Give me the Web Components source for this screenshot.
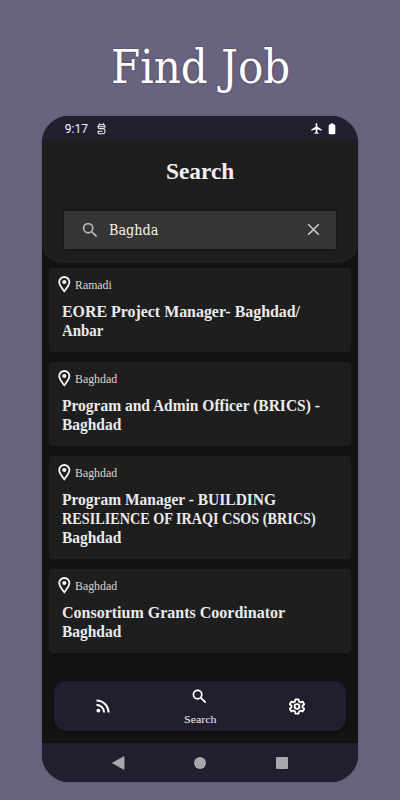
<!DOCTYPE html>
<html lang="en">
<head>
<meta charset="utf-8">
<title>Find Job</title>
<style>
    body {
        margin: 0;
        width: 400px;
        height: 800px;
        overflow: hidden;
        background: #6a6380;
        color: #ececec;
        font-family: "Liberation Serif", serif;
    }
</style>
</head>
<body>
<job-promo>
    <fit-text slot="headline" width="179">Find Job</fit-text>
    <phone-frame>
        <status-bar slot="top">9:17</status-bar>
        <search-header query="Baghda" query-width="49.5">
            <fit-text width="68.5">Search</fit-text>
        </search-header>
        <job-card>
            <fit-text slot="place" width="36.5">Ramadi</fit-text>
            <fit-text width="238">EORE Project Manager- Baghdad/</fit-text>
            <fit-text width="41.5">Anbar</fit-text>
        </job-card>
        <job-card>
            <fit-text slot="place" width="42.5">Baghdad</fit-text>
            <fit-text width="258">Program and Admin Officer (BRICS) -</fit-text>
            <fit-text width="59">Baghdad</fit-text>
        </job-card>
        <job-card>
            <fit-text slot="place" width="42.5">Baghdad</fit-text>
            <fit-text width="214">Program Manager - BUILDING</fit-text>
            <fit-text width="254">RESILIENCE OF IRAQI CSOS (BRICS)</fit-text>
            <fit-text width="59">Baghdad</fit-text>
        </job-card>
        <job-card>
            <fit-text slot="place" width="42.5">Baghdad</fit-text>
            <fit-text width="223">Consortium Grants Coordinator</fit-text>
            <fit-text width="59">Baghdad</fit-text>
        </job-card>
        <tab-bar slot="bottom"><fit-text width="32.5">Search</fit-text></tab-bar>
        <system-bar slot="bottom"></system-bar>
    </phone-frame>
</job-promo>

<script>
class BaseElement extends HTMLElement {
    constructor() {
        super();
        this.attachShadow({ mode: "open" });
    }

    connectedCallback() {
        this.shadowRoot.innerHTML = this.render();
    }
}

// A single line of text, stretched horizontally to the given width.
class FitText extends BaseElement {
    render() {
        return `
            <style>
                :host { display: block; white-space: nowrap; width: ${this.getAttribute("width")}px; }
                span { display: inline-block; transform-origin: 0 50%; }
            </style>
            <span><slot></slot></span>`;
    }

    fit() {
        const span = this.shadowRoot.querySelector("span");
        const scale = Number(this.getAttribute("width")) / span.offsetWidth;
        span.style.transform = `scaleX(${scale})`;
    }
}

class JobPromo extends BaseElement {
    render() {
        return `
            <style>
                :host { display: flex; flex-direction: column; align-items: center; height: 800px; }
                header {
                    box-sizing: border-box;
                    height: 116px;
                    padding: 37px 0 0 0;
                    font-family: "DejaVu Serif Condensed", "DejaVu Serif", serif;
                    font-size: 46px;
                    line-height: 60px;
                    color: #fff;
                    text-shadow: 0 0 2px #39334f;
                }
            </style>
            <header><slot name="headline"></slot></header>
            <slot></slot>`;
    }
}

class PhoneFrame extends BaseElement {
    render() {
        return `
            <style>
                :host {
                    display: flex;
                    flex-direction: column;
                    width: 315.5px;
                    height: 666px;
                    border-radius: 27px;
                    overflow: hidden;
                    background: #121212;
                    box-shadow: 0 0 2px #36314688;
                }
                main { flex: 1; display: flex; flex-direction: column; gap: 10px; }
            </style>
            <slot name="top"></slot>
            <main><slot></slot></main>
            <slot name="bottom"></slot>`;
    }
}

class StatusBar extends BaseElement {
    render() {
        return `
            <style>
                :host {
                    display: flex;
                    align-items: center;
                    box-sizing: border-box;
                    height: 24px;
                    padding: 1px 21.5px 0 22.5px;
                    background: #211e2e;
                    color: #f4f4f6;
                    font: 12px Roboto, sans-serif;
                }
                .debug { margin-left: 9px; }
                .plane { margin-left: auto; }
                .battery { margin-left: 6px; }
            </style>
            <slot></slot>
            <svg class="debug" width="9" height="12" viewBox="0 0 9 12" fill="none" stroke="#eee" stroke-width="1.1">
                <path d="M2.2.4l.8 1.300M6.800.4L6 1.700M7.900 4.700V3.200Q7.900 1.700 6.400 1.700H2.600Q1.100 1.700 1.100 3.200V4.200Q1.100 5.600 2.600 5.600H6.400Q7.900 5.600 7.900 7V9.100Q7.900 10.700 6.400 10.700H2.600Q1.100 10.700 1.100 9.100V7.800M1.100 3.700H7.900M1.100 8.200H5.500"/>
            </svg>
            <svg class="plane" width="11" height="11" viewBox="2 2 20 20" fill="#fff">
                <path d="M21.5 16v-2l-8-5V3.500a1.500 1.500 0 0 0-3 0V9l-8 5v2l8-2.500V19l-2.300 1.500V22l3.800-1 3.800 1v-1.500L13.500 19v-5.500z"/>
            </svg>
            <svg class="battery" width="8" height="12" viewBox="0 0 8 12" fill="#fff">
                <path d="M2.500 .5h3v1h.8q1 0 1 1v7.700q0 1-1 1H1.700q-1 0-1-1V2.500q0-1 1-1h.8z"/>
            </svg>`;
    }
}

class SearchHeader extends BaseElement {
    render() {
        return `
            <style>
                :host {
                    display: flex;
                    flex-direction: column;
                    align-items: center;
                    box-sizing: border-box;
                    height: 123px;
                    margin-bottom: -5px;
                    background: #1e1e1e;
                    border-radius: 0 0 19px 19px;
                }
                h1 {
                    margin: 18px 0 0;
                    font-size: 23.5px;
                    line-height: 26px;
                    height: 52.5px;
                    color: #f0f0f0;
                }
                .field {
                    display: flex;
                    align-items: center;
                    box-sizing: border-box;
                    width: 272px;
                    height: 38.5px;
                    padding: 0 16px 0 17.5px;
                    background: #353535;
                    box-shadow: 0 0 3px #0009;
                    font-family: "DejaVu Serif Condensed", "DejaVu Serif", serif;
                    font-size: 15px;
                    color: #f2f2f2;
                }
                .field fit-text { margin: 1px auto 0 11.5px; }
            </style>
            <h1><slot></slot></h1>
            <div class="field">
                <svg width="16" height="16" viewBox="0 0 16 16" fill="none" stroke="#b5b5b5" stroke-width="1.7">
                    <circle cx="6.2" cy="6.2" r="4.6"/><path d="M9.7 9.700l4.900 4.900"/>
                </svg>
                <fit-text width="${this.getAttribute("query-width")}">${this.getAttribute("query")}</fit-text>
                <svg width="13" height="13" viewBox="0 0 13 13" stroke="#d0d0d0" stroke-width="1.5">
                    <path d="M1.200 1.200l10.600 10.600M11.800 1.200L1.200 11.800"/>
                </svg>
            </div>`;
    }
}

class JobCard extends BaseElement {
    render() {
        return `
            <style>
                :host {
                    display: block;
                    box-sizing: border-box;
                    margin: 0 7px;
                    padding: 8px 6px 11.2px 9px;
                    border-radius: 4px;
                    background: #1e1e1e;
                }
                .place {
                    display: flex;
                    gap: 3.5px;
                    height: 27.2px;
                    font-size: 12px;
                    line-height: 18px;
                    color: #d8d8d8;
                }
                .title {
                    padding-left: 3.5px;
                    font-size: 16.5px;
                    font-weight: bold;
                    line-height: 18.8px;
                    color: #ebebeb;
                }
            </style>
            <div class="place">
                <svg width="13" height="17" viewBox="0 0 13 17" fill="none" stroke="#f5f5f5" stroke-width="1.8">
                    <path d="M6.300 15.300C3.800 12.200 1.200 9.200 1.200 6.100a5.100 5.100 0 0 1 10.200 0C11.400 9.200 8.800 12.200 6.300 15.300z"/>
                    <circle cx="6.3" cy="6" r="2.1" fill="#f5f5f5" stroke="none"/>
                </svg>
                <slot name="place"></slot>
            </div>
            <div class="title"><slot></slot></div>`;
    }
}

class TabBar extends BaseElement {
    render() {
        return `
            <style>
                :host {
                    display: grid;
                    grid-template-columns: repeat(3, 1fr);
                    place-items: center;
                    height: 50px;
                    margin: 0 12px;
                    border-radius: 12px;
                    background: #211e2e;
                    box-shadow: 0 1px 2px #0006;
                    font-size: 11px;
                    color: #f0f0f0;
                }
                .active {
                    display: flex;
                    flex-direction: column;
                    align-items: center;
                    gap: 8px;
                    padding-top: 3px;
                    line-height: 14px;
                }
            </style>
            <svg width="14" height="14" viewBox="0 0 14 14" fill="none" stroke="#fff" stroke-width="2.1">
                <circle cx="2.4" cy="11.600" r="1.900" fill="#fff" stroke="none"/>
                <path d="M.5 5.900A7.600 7.600 0 0 1 8.100 13.500M.5 1.500A12 12 0 0 1 12.500 13.500"/>
            </svg>
            <div class="active">
                <svg width="15" height="15" viewBox="0 0 15 15" fill="none" stroke="#fff" stroke-width="1.7">
                    <circle cx="5.6" cy="5.6" r="4.2"/><path d="M8.900 8.900l4.800 4.800"/>
                </svg>
                <slot></slot>
            </div>
            <svg width="16" height="17" viewBox="2 1.5 20 21" fill="none" stroke="#fff" stroke-width="2.3" stroke-linejoin="round">
                <path d="M10 3h4l.5 2.700 1.900 1.100 2.600-1 2 3.400-2.100 1.800v2l2.100 1.800-2 3.400-2.600-1-1.900 1.100L14 21h-4l-.5-2.700-1.900-1.100-2.600 1-2-3.400L5.100 13v-2L3 9.200l2-3.400 2.600 1 1.900-1.100z"/>
                <circle cx="12" cy="12" r="3"/>
            </svg>`;
    }
}

class SystemBar extends BaseElement {
    render() {
        return `
            <style>
                :host {
                    display: grid;
                    grid-template-columns: repeat(3, 81.5px);
                    justify-content: center;
                    place-items: center;
                    height: 39px;
                    margin-top: 12px;
                    background: #211e2e;
                }
                svg { fill: #aaa7ae; }
            </style>
            <svg width="13" height="14" viewBox="0 0 13 14"><path d="M12 .6v12.800L.5 7z" stroke="#aaa7ae" stroke-width=".8" stroke-linejoin="round"/></svg>
            <svg width="12" height="12" viewBox="0 0 12 12"><circle cx="6" cy="6" r="6"/></svg>
            <svg width="12" height="12" viewBox="0 0 12 12"><rect width="12" height="12" rx="1"/></svg>`;
    }
}

customElements.define("fit-text", FitText);
customElements.define("job-promo", JobPromo);
customElements.define("phone-frame", PhoneFrame);
customElements.define("status-bar", StatusBar);
customElements.define("search-header", SearchHeader);
customElements.define("job-card", JobCard);
customElements.define("tab-bar", TabBar);
customElements.define("system-bar", SystemBar);

// widths are only known once every parent has its shadow root and font size
const fitAll = (root) => {
    root.querySelectorAll("*").forEach((el) => {
        if (el instanceof FitText) el.fit();
        else if (el.shadowRoot) fitAll(el.shadowRoot);
    });
};
fitAll(document);
</script>
</body>
</html>
